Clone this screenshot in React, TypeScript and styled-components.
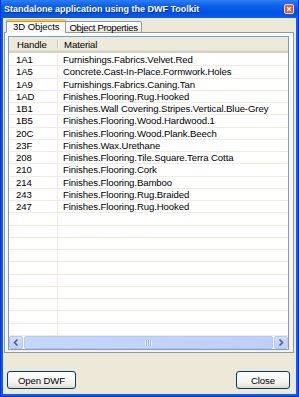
import styled, { createGlobalStyle } from 'styled-components'

const rows: [string, string][] = [
  ['1A1', 'Furnishings.Fabrics.Velvet.Red'],
  ['1A5', 'Concrete.Cast-In-Place.Formwork.Holes'],
  ['1A9', 'Furnishings.Fabrics.Caning.Tan'],
  ['1AD', 'Finishes.Flooring.Rug.Hooked'],
  ['1B1', 'Finishes.Wall Covering.Stripes.Vertical.Blue-Grey'],
  ['1B5', 'Finishes.Flooring.Wood.Hardwood.1'],
  ['20C', 'Finishes.Flooring.Wood.Plank.Beech'],
  ['23F', 'Finishes.Wax.Urethane'],
  ['208', 'Finishes.Flooring.Tile.Square.Terra Cotta'],
  ['210', 'Finishes.Flooring.Cork'],
  ['214', 'Finishes.Flooring.Bamboo'],
  ['243', 'Finishes.Flooring.Rug.Braided'],
  ['247', 'Finishes.Flooring.Rug.Hooked'],
]

const EMPTY_ROWS = 14
const FONT = '"Liberation Sans", Arial, sans-serif'

const GlobalStyle = createGlobalStyle`
  html, body {
    margin: 0;
    padding: 0;
    background: #ece9d8;
  }
  body {
    font-family: ${FONT};
    font-size: 9.6px;
    letter-spacing: -0.1px;
    color: #000;
  }
`

const Window = styled.div`
  width: 299px;
  height: 397px;
  box-sizing: border-box;
  display: flex;
  flex-direction: column;
  background: #0b5ce6;
  border-left: 1px solid #0831d9;
  border-right: 1px solid #0831d9;
  border-bottom: 1px solid #0831d9;
  padding: 0 2px 2px 2px;
`

const TitleBar = styled.div`
  height: 18px;
  flex: none;
  display: flex;
  align-items: center;
  justify-content: space-between;
  margin: 0 -2px;
  padding: 0 4px 0 3px;
  background: linear-gradient(#2d7df3 0%, #0a5ee8 35%, #0053e0 70%, #0a5de6 100%);
`

const Title = styled.span`
  color: #fff;
  font-weight: bold;
  font-size: 9px;
  letter-spacing: 0;
  text-shadow: 1px 1px 0 #0a2e90;
  white-space: nowrap;
`

const CloseBox = styled.div`
  width: 10px;
  height: 10px;
  display: flex;
  svg {
    display: block;
  }
`

const Body = styled.div`
  flex: 1;
  display: flex;
  flex-direction: column;
  background: #ece9d8;
  padding: 1px 2px 0 1px;
`

const TabStrip = styled.div`
  display: flex;
  align-items: flex-end;
  height: 14px;
  padding-left: 2px;
  position: relative;
  z-index: 1;
  margin-bottom: -1px;
`

const Tab = styled.div<{ $active?: boolean }>`
  box-sizing: border-box;
  height: ${p => (p.$active ? 14 : 12)}px;
  padding: 0 ${p => (p.$active ? 6 : 3)}px;
  display: flex;
  align-items: center;
  border: 1px solid #919b9c;
  border-bottom: ${p => (p.$active ? '1px solid #fcfcfe' : '1px solid #919b9c')};
  border-top: ${p => (p.$active ? '2px solid #ffc83c' : '1px solid #919b9c')};
  border-radius: 2px 2px 0 0;
  background: ${p => (p.$active ? '#fcfcfe' : 'linear-gradient(#fefefe, #f3f2ec 80%, #e6e4da)')};
  box-shadow: ${p => (p.$active ? 'inset 0 1px 0 #e68b2c' : 'none')};
  margin-left: ${p => (p.$active ? 0 : -1)}px;
  letter-spacing: ${p => (p.$active ? -0.1 : -0.35)}px;
  white-space: nowrap;
`

const Panel = styled.div`
  box-sizing: border-box;
  height: 321px;
  border: 1px solid #919b9c;
  background: linear-gradient(#fcfcfe, #f4f3ee);
  padding: 3px 4px 2px 3px;
  display: flex;
`

const ListBox = styled.div`
  flex: 1;
  border: 1px solid #7f9db9;
  background: #fff;
  display: flex;
  flex-direction: column;
  overflow: hidden;
`

const HeaderRow = styled.div`
  flex: none;
  display: flex;
  height: 16px;
  box-sizing: border-box;
  background: #ebeadb;
  border-bottom: 2px solid #d6d2c2;
  box-shadow: inset 0 -1px 0 #e2decd;
`

const HeaderCell = styled.div<{ $w?: number }>`
  ${p => (p.$w ? `width: ${p.$w}px;` : 'flex: 1;')}
  flex-shrink: 0;
  box-sizing: border-box;
  padding-left: ${p => (p.$w ? 8 : 6)}px;
  display: flex;
  align-items: center;
  position: relative;
  &::after {
    content: '';
    position: absolute;
    right: 0;
    top: 3px;
    bottom: 3px;
    width: 1px;
    background: #c7c5b2;
    box-shadow: 1px 0 0 #fff;
    display: ${p => (p.$w ? 'block' : 'none')};
  }
`

const Rows = styled.div`
  flex: 1;
  overflow: hidden;
  padding-top: 1px;
`

const Row = styled.div`
  display: flex;
  height: 12.25px;
  box-sizing: border-box;
  border-bottom: 1px solid #efede3;
`

const Cell = styled.div<{ $w?: number }>`
  ${p => (p.$w ? `width: ${p.$w}px;` : 'flex: 1;')}
  flex-shrink: 0;
  box-sizing: border-box;
  padding-left: ${p => (p.$w ? 7 : 5)}px;
  padding-top: 1px;
  border-right: ${p => (p.$w ? '1px solid #efede3' : 'none')};
  line-height: 10px;
  white-space: nowrap;
  overflow: hidden;
`

const HScroll = styled.div`
  flex: none;
  height: 13px;
  display: flex;
  background: #fdfdfa;
`

const ScrollBtn = styled.div`
  width: 14px;
  box-sizing: border-box;
  border: 1px solid #b6c9f4;
  border-radius: 2px;
  background: linear-gradient(#d3e0fc, #bcd0fa);
  display: flex;
  align-items: center;
  justify-content: center;
`

const Thumb = styled.div`
  flex: 1;
  margin: 0 1px;
  box-sizing: border-box;
  border: 1px solid #b6c9f4;
  border-radius: 2px;
  background: linear-gradient(90deg, #c6d7fc, #bcd0fa);
  display: flex;
  align-items: center;
  justify-content: center;
`

const Grip = styled.div`
  width: 7px;
  height: 6px;
  background: repeating-linear-gradient(90deg, #eef4fe 0 1px, #8cb0f8 1px 2px);
`

const Footer = styled.div`
  flex: 1;
  display: flex;
  align-items: flex-end;
  justify-content: space-between;
  padding: 0 4px 5px 3px;
`

const Button = styled.button<{ $w: number }>`
  width: ${p => p.$w}px;
  height: 18px;
  padding: 0;
  border: 1px solid #003c74;
  border-radius: 3px;
  background: linear-gradient(#ffffff, #f4f3ee 70%, #dcd8c9);
  font-family: ${FONT};
  font-size: 9.6px;
  letter-spacing: -0.1px;
  color: #000;
`

const Arrow = ({ dir }: { dir: 'left' | 'right' }) => (
  <svg width="6" height="7" viewBox="0 0 6 7">
    <path
      d={dir === 'left' ? 'M4.5 0.5 L1.5 3.5 L4.5 6.5' : 'M1.5 0.5 L4.5 3.5 L1.5 6.5'}
      fill="none"
      stroke="#4d6185"
      strokeWidth="1.6"
    />
  </svg>
)

const App = () => (
  <>
    <GlobalStyle />
    <Window>
      <TitleBar>
        <Title>Standalone application using the DWF Toolkit</Title>
        <CloseBox>
          <svg width="10" height="10" viewBox="0 0 10 10">
            <rect x="0.5" y="0.5" width="9" height="9" rx="1.5" fill="#e2572e" stroke="#f6d2c4" />
            <path d="M3 3 L7 7 M7 3 L3 7" stroke="#fff" strokeWidth="1.4" />
          </svg>
        </CloseBox>
      </TitleBar>
      <Body>
        <TabStrip>
          <Tab $active>3D Objects</Tab>
          <Tab>Object Properties</Tab>
        </TabStrip>
        <Panel>
          <ListBox>
            <HeaderRow>
              <HeaderCell $w={49}>Handle</HeaderCell>
              <HeaderCell>Material</HeaderCell>
            </HeaderRow>
            <Rows>
              {rows.map(([h, m]) => (
                <Row key={h}>
                  <Cell $w={49}>{h}</Cell>
                  <Cell>{m}</Cell>
                </Row>
              ))}
              {Array.from({ length: EMPTY_ROWS }, (_, i) => (
                <Row key={'e' + i}>
                  <Cell $w={49} />
                  <Cell />
                </Row>
              ))}
            </Rows>
            <HScroll>
              <ScrollBtn>
                <Arrow dir="left" />
              </ScrollBtn>
              <Thumb>
                <Grip />
              </Thumb>
              <ScrollBtn>
                <Arrow dir="right" />
              </ScrollBtn>
            </HScroll>
          </ListBox>
        </Panel>
        <Footer>
          <Button $w={69}>Open DWF</Button>
          <Button $w={54}>Close</Button>
        </Footer>
      </Body>
    </Window>
  </>
)

export default App
